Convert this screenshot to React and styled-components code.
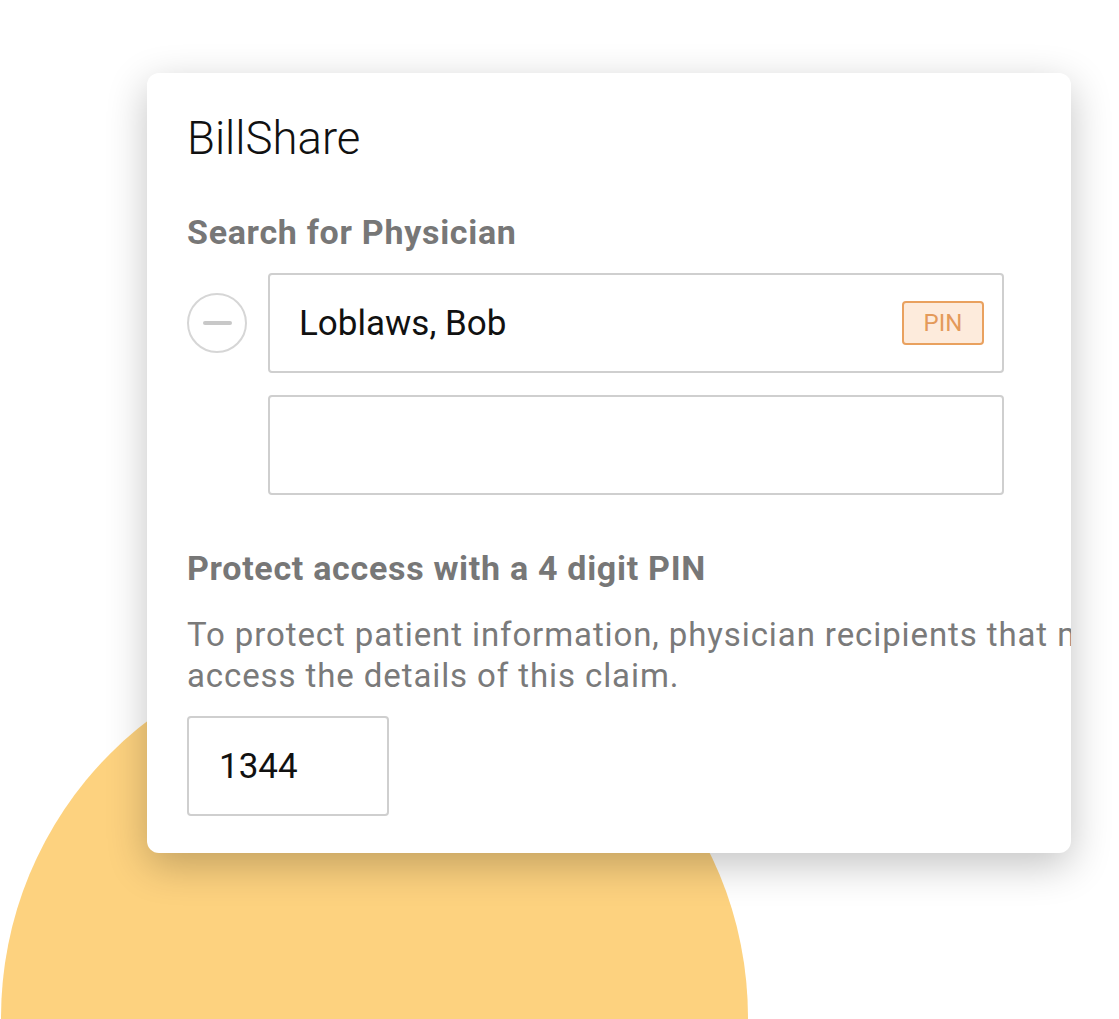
import React from "react";
import styled, { createGlobalStyle } from "styled-components";

const GlobalStyle = createGlobalStyle`
  html, body {
    margin: 0;
    padding: 0;
    background: #ffffff;
  }
  body {
    font-family: Roboto, "Noto Sans", Arial, sans-serif;
  }
`;

export default function App() {
  return (
    <Page>
      <GlobalStyle />
      <Blob />
      <Card>
        <Title>BillShare</Title>
        <Label>Search for Physician</Label>
        <Row>
          <RemoveButton aria-label="remove">
            <span />
          </RemoveButton>
          <Field>
            <FieldText>Loblaws, Bob</FieldText>
            <Badge>PIN</Badge>
          </Field>
        </Row>
        <Row>
          <Spacer />
          <Field />
        </Row>
        <Label $top={56}>Protect access with a 4 digit PIN</Label>
        <Description>
          To protect patient information, physician recipients that must enter this PIN to
          <br />
          access the details of this claim.
        </Description>
        <PinField>
          <FieldText>1344</FieldText>
        </PinField>
      </Card>
    </Page>
  );
}

const Page = styled.div`
  position: relative;
  width: 1119px;
  height: 1019px;
  overflow: hidden;
  padding: 73px 0 0 147px;
  box-sizing: border-box;
`;

const Blob = styled.div`
  position: absolute;
  left: 1px;
  top: 644px;
  width: 747px;
  height: 747px;
  border-radius: 50%;
  background: #fdd27f;
`;

const Card = styled.div`
  position: relative;
  z-index: 1;
  width: 924px;
  height: 780px;
  box-sizing: border-box;
  padding: 43px 0 0 40px;
  background: #ffffff;
  border-radius: 12px;
  box-shadow: 0 12px 40px rgba(0, 0, 0, 0.24);
  overflow: hidden;
`;

const Title = styled.h1`
  margin: 0;
  font-size: 45.5px;
  line-height: 45px;
  font-weight: 300;
  color: #111111;
`;

const Label = styled.h2`
  margin: ${(p) => p.$top || 54}px 0 0;
  font-size: 34px;
  line-height: 34px;
  letter-spacing: 0.7px;
  font-weight: 700;
  color: #777777;
`;

const Row = styled.div`
  display: flex;
  align-items: center;
  gap: 21px;
  margin-top: 24px;
  & + & {
    margin-top: 22px;
  }
`;

const RemoveButton = styled.div`
  width: 60px;
  height: 60px;
  box-sizing: border-box;
  border: 2px solid #d6d6d6;
  border-radius: 50%;
  display: flex;
  align-items: center;
  justify-content: center;
  span {
    width: 29px;
    height: 4px;
    border-radius: 2px;
    background: #c8c8c8;
  }
`;

const Spacer = styled.div`
  width: 60px;
`;

const Field = styled.div`
  width: 736px;
  height: 100px;
  box-sizing: border-box;
  border: 2px solid #cfcfcf;
  border-radius: 4px;
  display: flex;
  align-items: center;
  justify-content: space-between;
  padding: 0 18px 0 29px;
`;

const FieldText = styled.span`
  font-size: 35px;
  color: #111111;
`;

const Badge = styled.span`
  width: 82px;
  height: 44px;
  box-sizing: border-box;
  border: 2px solid #e9a15f;
  border-radius: 4px;
  background: #fdebdc;
  color: #e49a5a;
  font-size: 24px;
  display: flex;
  align-items: center;
  justify-content: center;
`;

const Description = styled.p`
  margin: 29px 0 0;
  font-size: 33px;
  line-height: 41px;
  letter-spacing: 0.9px;
  color: #7a7a7a;
  white-space: nowrap;
`;

const PinField = styled(Field)`
  width: 202px;
  margin-top: 20px;
  padding-left: 30px;
`;
